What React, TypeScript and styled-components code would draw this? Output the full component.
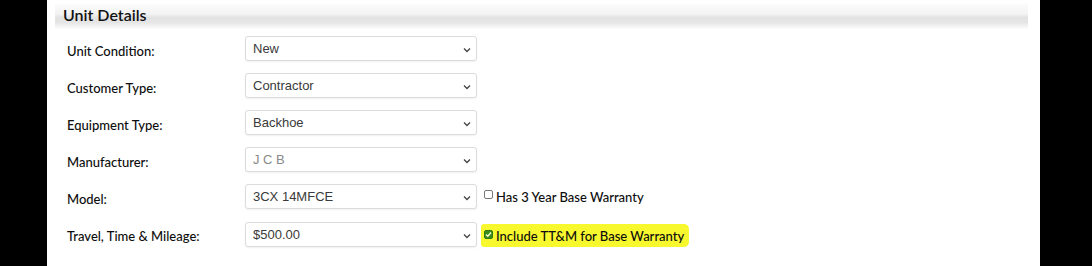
import React from "react";
import styled, { createGlobalStyle } from "styled-components";

const GlobalStyle = createGlobalStyle`
  html, body {
    margin: 0;
    padding: 0;
    background: #000;
  }
`;

interface Field {
  label: string;
  value: string;
  disabled?: boolean;
  check?: { text: string; checked: boolean; highlight?: boolean };
}

const fields: Field[] = [
  { label: "Unit Condition:", value: "New" },
  { label: "Customer Type:", value: "Contractor" },
  { label: "Equipment Type:", value: "Backhoe" },
  { label: "Manufacturer:", value: "J C B", disabled: true },
  {
    label: "Model:",
    value: "3CX 14MFCE",
    check: { text: "Has 3 Year Base Warranty", checked: false },
  },
  {
    label: "Travel, Time & Mileage:",
    value: "$500.00",
    check: { text: "Include TT&M for Base Warranty", checked: true, highlight: true },
  },
];

const Chevron = () => (
  <ChevronIcon width="8" height="6" viewBox="0 0 8 6">
    <path d="M1 1.5 L4 4.5 L7 1.5" fill="none" stroke="#444" strokeWidth="1.3" />
  </ChevronIcon>
);

const App: React.FC = () => {
  return (
    <>
      <GlobalStyle />
      <Page>
        <Panel>
          <SectionHeader>
            <SectionTitle>Unit Details</SectionTitle>
          </SectionHeader>
          <FieldGrid>
            {fields.map((f) => (
              <React.Fragment key={f.label}>
                <Label>{f.label}</Label>
                <ControlCell>
                  <SelectBox $disabled={f.disabled}>
                    <span>{f.value}</span>
                    <Chevron />
                  </SelectBox>
                  {f.check && (
                    <CheckLabel $highlight={f.check.highlight}>
                      <Box $checked={f.check.checked}>
                        {f.check.checked && (
                          <svg width="7" height="7" viewBox="0 0 7 7">
                            <path
                              d="M1 3.6 L2.8 5.3 L6 1.5"
                              fill="none"
                              stroke="#f4ffd0"
                              strokeWidth="1.4"
                            />
                          </svg>
                        )}
                      </Box>
                      {f.check.text}
                    </CheckLabel>
                  )}
                </ControlCell>
              </React.Fragment>
            ))}
          </FieldGrid>
        </Panel>
      </Page>
    </>
  );
};

const Page = styled.div`
  width: 1092px;
  height: 266px;
  background: #000;
  overflow: hidden;
`;

const Panel = styled.div`
  margin-left: 47px;
  width: 993px;
  height: 266px;
  background: #fff;
  padding: 4px 0 0 8px;
  box-sizing: border-box;
`;

const SectionHeader = styled.div`
  width: 973px;
  height: 25px;
  background: linear-gradient(
    to bottom,
    #fbfbfb 0%,
    #f3f3f3 40%,
    #e2e2e2 55%,
    #e6e6e6 75%,
    #fdfdfd 100%
  );
  display: flex;
  align-items: center;
  padding-left: 8px;
  box-sizing: border-box;
`;

const SectionTitle = styled.h3`
  margin: 0;
  font-family: Lato, "Open Sans", sans-serif;
  font-size: 16px;
  font-weight: 600;
  color: #111;
  line-height: 20px;
  margin-top: -3px;
`;

const FieldGrid = styled.div`
  display: grid;
  grid-template-columns: 178px auto;
  row-gap: 12px;
  margin-top: 7px;
  padding-left: 12px;
`;

const Label = styled.div`
  font-family: Lato, "Open Sans", sans-serif;
  font-size: 13px;
  font-weight: 500;
  color: #0d0d0d;
  display: flex;
  align-items: center;
  padding-top: 4px;
`;

const ControlCell = styled.div`
  display: flex;
  align-items: center;
`;

const SelectBox = styled.div<{ $disabled?: boolean }>`
  position: relative;
  width: 232px;
  height: 25px;
  box-sizing: border-box;
  border: 1px solid #dcdcdc;
  border-radius: 3px;
  box-shadow: 0 1px 2px rgba(0, 0, 0, 0.06);
  background: #fff;
  padding-left: 7px;
  display: flex;
  align-items: center;
  font-family: "Liberation Sans", Arial, sans-serif;
  font-size: 13px;
  color: ${({ $disabled }) => ($disabled ? "#8a8a8a" : "#3a3a3a")};
`;

const ChevronIcon = styled.svg`
  position: absolute;
  right: 5px;
  top: 10px;
`;

const CheckLabel = styled.label<{ $highlight?: boolean }>`
  display: flex;
  align-items: center;
  gap: 3px;
  margin-left: ${({ $highlight }) => ($highlight ? "4px" : "7px")};
  padding: ${({ $highlight }) => ($highlight ? "4px 5px 3px 3px" : "0")};
  background: ${({ $highlight }) => ($highlight ? "#f8f82e" : "transparent")};
  border-radius: ${({ $highlight }) => ($highlight ? "3px 5px 5px 3px" : "0")};
  font-family: Lato, "Open Sans", sans-serif;
  font-size: 13px;
  font-weight: 500;
  color: #0d0d0d;
  margin-top: ${({ $highlight }) => ($highlight ? "3px" : "0")};
`;

const Box = styled.span<{ $checked: boolean }>`
  width: 9px;
  height: 9px;
  box-sizing: border-box;
  border: 1px solid ${({ $checked }) => ($checked ? "#2d7a12" : "#777")};
  border-radius: 2px;
  background: ${({ $checked }) => ($checked ? "#3b8a1a" : "#fff")};
  display: inline-flex;
  align-items: center;
  justify-content: center;
  margin-top: -4px;
`;

export default App;
